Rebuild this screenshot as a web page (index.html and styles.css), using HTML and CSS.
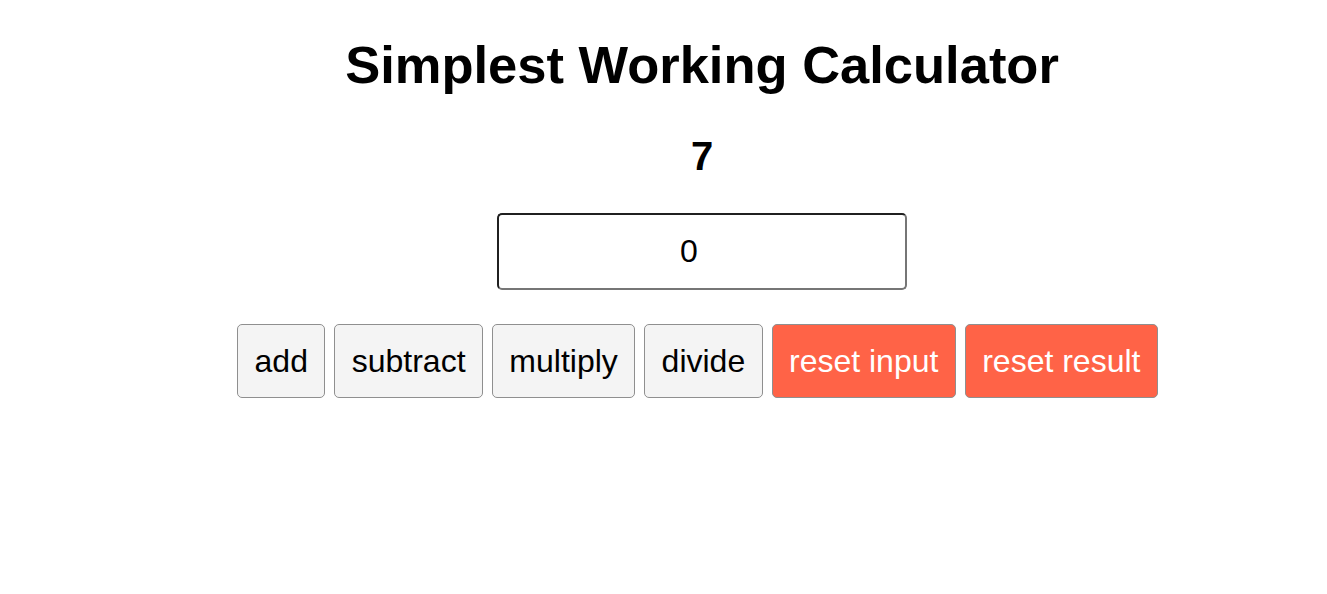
FILE: index.html
```html
<!DOCTYPE html>
<html lang="en">
<head>
<meta charset="utf-8">
<title>Simplest Working Calculator</title>
<link rel="stylesheet" href="styles.css">
</head>
<body>
<main class="app">
  <h1 class="title">Simplest Working Calculator</h1>
  <p class="result">7</p>
  <input class="entry" type="text" value="0">
  <div class="buttons">
    <button class="btn">add</button>
    <button class="btn">subtract</button>
    <button class="btn">multiply</button>
    <button class="btn">divide</button>
    <button class="btn btn-reset">reset input</button>
    <button class="btn btn-reset">reset result</button>
  </div>
</main>
</body>
</html>
```
FILE: styles.css
```css
html, body {
  margin: 0;
  padding: 0;
  background: #fff;
}
body {
  font-family: "Liberation Sans", Arial, sans-serif;
  color: #000;
}
.app {
  display: flex;
  flex-direction: column;
  align-items: center;
  padding-left: 77px;
}
.title {
  margin: 35px 0 0;
  font-size: 52.5px;
  font-weight: bold;
  line-height: 60px;
}
.result {
  margin: 38px 0 0;
  font-size: 40px;
  font-weight: bold;
  line-height: 46px;
}
.entry {
  box-sizing: border-box;
  margin: 34px 0 0;
  width: 410px;
  height: 77px;
  padding: 0 26px 0 0;
  border: 2px solid;
  border-color: #202020 #767676 #767676 #202020;
  border-radius: 5px;
  font-family: "Liberation Sans", Arial, sans-serif;
  font-size: 32px;
  text-align: center;
  color: #000;
  background: #fff;
  outline: none;
}
.buttons {
  display: flex;
  gap: 9px;
  margin-top: 34px;
  padding-right: 9px;
}
.btn {
  box-sizing: border-box;
  height: 74px;
  padding: 0 16.4px;
  border: 1px solid #8f8f8f;
  border-radius: 5px;
  background: #f4f4f4;
  font-family: "Liberation Sans", Arial, sans-serif;
  font-size: 32px;
  color: #000;
}
.btn-reset {
  background: #ff6347;
  color: #fff;
}
```
